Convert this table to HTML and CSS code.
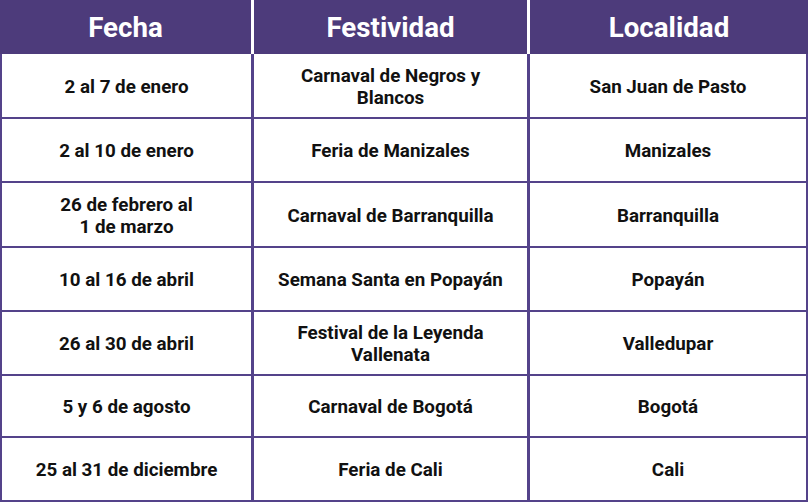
FILE: index.html
```html
<!DOCTYPE html>
<html lang="es">
<head>
<meta charset="utf-8">
<title>Festividades</title>
<link rel="stylesheet" href="styles.css">
</head>
<body>
<div class="table">
  <div class="head">
    <div class="hcell">Fecha</div>
    <div class="hcell">Festividad</div>
    <div class="hcell">Localidad</div>
  </div>
  <div class="body">
    <div class="cell">2 al 7 de enero</div>
    <div class="cell">Carnaval de Negros y<br>Blancos</div>
    <div class="cell">San Juan de Pasto</div>

    <div class="cell">2 al 10 de enero</div>
    <div class="cell">Feria de Manizales</div>
    <div class="cell">Manizales</div>

    <div class="cell">26 de febrero al<br>1 de marzo</div>
    <div class="cell">Carnaval de Barranquilla</div>
    <div class="cell">Barranquilla</div>

    <div class="cell">10 al 16 de abril</div>
    <div class="cell">Semana Santa en Popayán</div>
    <div class="cell">Popayán</div>

    <div class="cell">26 al 30 de abril</div>
    <div class="cell">Festival de la Leyenda<br>Vallenata</div>
    <div class="cell">Valledupar</div>

    <div class="cell">5 y 6 de agosto</div>
    <div class="cell">Carnaval de Bogotá</div>
    <div class="cell">Bogotá</div>

    <div class="cell">25 al 31 de diciembre</div>
    <div class="cell">Feria de Cali</div>
    <div class="cell">Cali</div>
  </div>
</div>
</body>
</html>
```
FILE: styles.css
```css
html, body {
  margin: 0;
  padding: 0;
  background: #ffffff;
}
body {
  font-family: Roboto, "Liberation Sans", Arial, sans-serif;
  width: 808px;
  height: 502px;
  overflow: hidden;
}
.table {
  width: 808px;
  display: flex;
  flex-direction: column;
}
.head {
  display: grid;
  grid-template-columns: 251px 273px 278px;
  column-gap: 3px;
  height: 54px;
  background: #ffffff;
}
.hcell {
  background: #4d3b7b;
  color: #ffffff;
  font-weight: 700;
  font-size: 27.7px;
  display: flex;
  align-items: center;
  justify-content: center;
  padding-top: 1px;
}
.body {
  display: grid;
  grid-template-columns: 249px 273px 276px;
  grid-template-rows: 63px 62px 63px 62px 62px 60px 62px;
  column-gap: 3px;
  row-gap: 2px;
  padding: 0 2px 2px 2px;
  background: #54438a;
}
.cell {
  background: #ffffff;
  color: #111111;
  font-weight: 700;
  font-size: 18.8px;
  line-height: 22px;
  text-align: center;
  display: flex;
  align-items: center;
  justify-content: center;
  padding-top: 2px;
}
```
